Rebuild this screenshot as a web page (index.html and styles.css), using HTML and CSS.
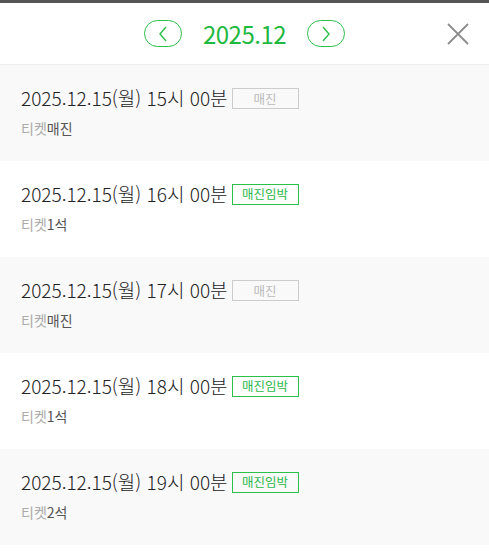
FILE: index.html
```html
<!DOCTYPE html>
<html lang="ko">
<head>
    <meta charset="UTF-8">
    <meta name="viewport" content="width=device-width, initial-scale=1.0">
    <title>회차 선택</title>
    <link rel="stylesheet" href="styles.css">
</head>
<body>
    <div class="top-bar"></div>
    <div class="header">
        <button class="month-btn" aria-label="이전 달">
            <svg width="12" height="16" viewBox="0 0 12 16"><path d="M9 1 L3 8 L9 15" fill="none" stroke="#2cbf4a" stroke-width="1.4"/></svg>
        </button>
        <span class="month-title">2025.12</span>
        <button class="month-btn" aria-label="다음 달">
            <svg width="12" height="16" viewBox="0 0 12 16"><path d="M3 1 L9 8 L3 15" fill="none" stroke="#2cbf4a" stroke-width="1.4"/></svg>
        </button>
        <button class="close-btn" aria-label="닫기">
            <svg width="22" height="22" viewBox="0 0 22 22"><path d="M1 1 L21 21 M21 1 L1 21" stroke="#8c8c8c" stroke-width="1.8"/></svg>
        </button>
    </div>

    <ul class="schedule">
        <li class="item">
            <div class="item-title">2025.12.15(월) 15시 00분 <span class="badge soldout">매진</span></div>
            <div class="item-sub">티켓<em>매진</em></div>
        </li>
        <li class="item">
            <div class="item-title">2025.12.15(월) 16시 00분 <span class="badge hurry">매진임박</span></div>
            <div class="item-sub">티켓<em>1석</em></div>
        </li>
        <li class="item">
            <div class="item-title">2025.12.15(월) 17시 00분 <span class="badge soldout">매진</span></div>
            <div class="item-sub">티켓<em>매진</em></div>
        </li>
        <li class="item">
            <div class="item-title">2025.12.15(월) 18시 00분 <span class="badge hurry">매진임박</span></div>
            <div class="item-sub">티켓<em>1석</em></div>
        </li>
        <li class="item">
            <div class="item-title">2025.12.15(월) 19시 00분 <span class="badge hurry">매진임박</span></div>
            <div class="item-sub">티켓<em>2석</em></div>
        </li>
    </ul>
</body>
</html>
```

FILE: styles.css
```css
body {
    margin: 0;
    background: #fff;
    font-family: 'Noto Sans CJK KR', 'Noto Sans', sans-serif;
    color: #222;
}

.top-bar {
    height: 3px;
    background: #555;
}

.header {
    height: 61px;
    border-bottom: 1px solid #eee;
    display: flex;
    align-items: center;
    justify-content: center;
    gap: 21px;
    position: relative;
}

.month-btn {
    width: 38px;
    height: 27px;
    border: 1.5px solid #2cbf4a;
    border-radius: 14px;
    background: #fff;
    padding: 0;
    display: flex;
    align-items: center;
    justify-content: center;
    cursor: pointer;
}

.month-title {
    font-size: 24px;
    color: #1fb93f;
    letter-spacing: -0.5px;
    line-height: 1;
}

.close-btn {
    position: absolute;
    right: 20px;
    top: 20px;
    width: 22px;
    height: 22px;
    border: none;
    background: none;
    padding: 0;
    cursor: pointer;
}

.schedule {
    list-style: none;
    margin: 0;
    padding: 0;
}

.item {
    height: 96px;
    box-sizing: border-box;
    padding: 20px 21px 0;
}

.item:nth-child(odd) {
    background: #f9f9f9;
}

.item-title {
    font-size: 19px;
    font-weight: 300;
    line-height: 26px;
    display: flex;
    align-items: center;
    gap: 4px;
}

.badge {
    display: inline-block;
    width: 67px;
    height: 21px;
    box-sizing: border-box;
    font-size: 12.5px;
    font-weight: 400;
    line-height: 19px;
    text-align: center;
}

.badge.soldout {
    border: 1px solid #ccc;
    color: #bbb;
}

.badge.hurry {
    border: 1.5px solid #2cbf4a;
    color: #2cb84a;
    line-height: 18px;
}

.item-sub {
    margin-top: 7px;
    font-size: 14px;
    color: #aaa;
}

.item-sub em {
    font-style: normal;
    color: #555;
}
```
